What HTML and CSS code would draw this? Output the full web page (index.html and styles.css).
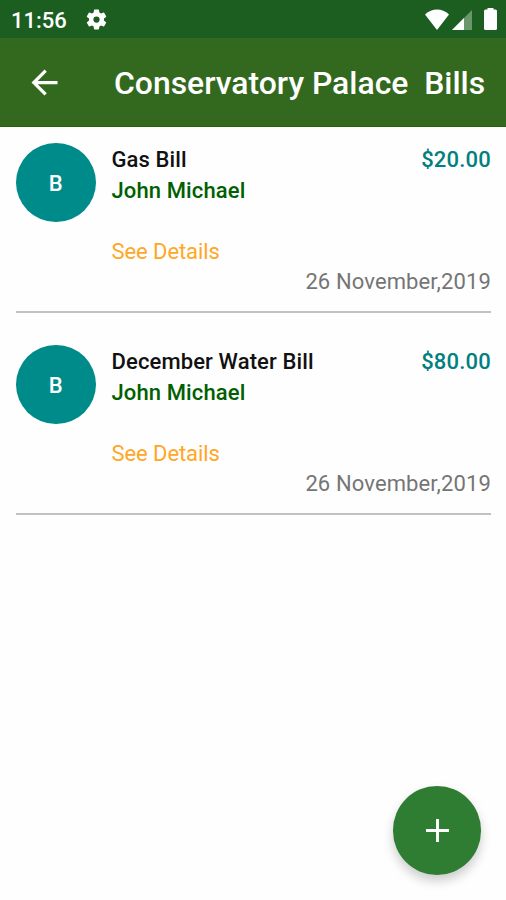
FILE: index.html
```
<!DOCTYPE html>
<html lang="en">
<head>
<meta charset="utf-8">
<title>Bills</title>
<link rel="stylesheet" href="styles.css">
</head>
<body>
<header>
  <div class="status">
    <span class="clock">11:56</span>
    <svg class="gear" viewBox="0 0 24 24"><path d="M19.14 12.94c.04-.3.06-.61.06-.94 0-.32-.02-.64-.07-.94l2.03-1.58a.49.49 0 0 0 .12-.61l-1.92-3.32a.49.49 0 0 0-.59-.22l-2.39.96c-.5-.38-1.03-.7-1.62-.94l-.36-2.54a.48.48 0 0 0-.48-.41h-3.84c-.24 0-.43.17-.47.41l-.36 2.54c-.59.24-1.13.57-1.62.94l-2.39-.96a.48.48 0 0 0-.59.22L2.74 8.87c-.12.21-.08.47.12.61l2.03 1.58c-.05.3-.09.63-.09.94s.02.64.07.94l-2.03 1.58a.49.49 0 0 0-.12.61l1.92 3.32c.12.22.37.29.59.22l2.39-.96c.5.38 1.03.7 1.62.94l.36 2.54c.05.24.24.41.48.41h3.84c.24 0 .44-.17.47-.41l.36-2.54c.59-.24 1.13-.56 1.62-.94l2.39.96c.22.08.47 0 .59-.22l1.92-3.32a.49.49 0 0 0-.12-.61zM12 15a3 3 0 1 1 0-6 3 3 0 0 1 0 6z"/></svg>
    <div class="indicators">
      <svg class="wifi" viewBox="0 0 24 21"><path d="M12 21 0 5.5Q5.500 .5 12 .5T24 5.500z"/></svg>
      <svg class="signal" viewBox="0 0 20 20"><path opacity=".35" d="M0 20 20 0v20z"/><path d="M0 20 12 8v12z"/></svg>
      <svg class="battery" viewBox="0 0 13 22"><path d="M3.500 0h6v1.500h2Q13 1.500 13 3v17.500Q13 22 11.500 22h-10Q0 22 0 20.500V3Q0 1.500 1.500 1.500h2z"/></svg>
    </div>
  </div>
  <div class="appbar">
    <svg class="back" viewBox="0 0 24 24"><path d="M20 11H7.830l5.590-5.590L12 4l-8 8 8 8 1.410-1.410L7.830 13H20z"/></svg>
    <h1>Conservatory Palace&nbsp; Bills</h1>
  </div>
</header>
<main>
  <article class="bill">
    <div class="avatar">B</div>
    <div class="info">
      <div class="row"><span class="name">Gas Bill</span><span class="amount">$20.00</span></div>
      <div class="person">John Michael</div>
      <div class="details">See Details</div>
      <div class="date">26 November,2019</div>
    </div>
  </article>
  <article class="bill">
    <div class="avatar">B</div>
    <div class="info">
      <div class="row"><span class="name">December Water Bill</span><span class="amount">$80.00</span></div>
      <div class="person">John Michael</div>
      <div class="details">See Details</div>
      <div class="date">26 November,2019</div>
    </div>
  </article>
</main>
<div class="fab"><svg viewBox="0 0 24 24"><path d="M10.600 1h2.800v9.600h9.600v2.800h-9.600V23h-2.800v-9.600H1v-2.800h9.600z"/></svg></div>
</body>
</html>
```
FILE: styles.css
```
* { box-sizing: border-box; }
body {
  margin: 0;
  height: 900px;
  overflow: hidden;
  background: #fefefe;
  font: 22px/30.5px Roboto, sans-serif;
}
svg { display: block; fill: #fff; }
.status {
  display: flex;
  align-items: center;
  height: 38px;
  padding: 0 9px 0 11px;
  background: #1b5e20;
  color: #fff;
}
.clock { width: 72.500px; font-weight: 500; font-size: 22px; padding-top: 4px; }
.gear { width: 25px; height: 25px; margin-top: 1px; }
.indicators { display: flex; align-items: flex-end; margin: 0 0 1px auto; }
.wifi { width: 24px; height: 21px; }
.signal { width: 20px; height: 20px; margin-left: 3px; }
.battery { width: 13px; height: 22px; margin-left: 12px; }
.appbar {
  display: flex;
  align-items: center;
  height: 89px;
  padding-left: 25px;
  background: #33691e;
  border-bottom: 1px solid #26600e;
  color: #fff;
}
.back { width: 39px; height: 39px; margin-top: 1px; }
h1 {
  margin: 1px 0 0 50px;
  font-size: 31.900px;
  line-height: 38px;
  font-weight: 500;
  white-space: nowrap;
}
main { padding: 0 15px 0 16px; }
.bill {
  display: flex;
  height: 186px;
  padding-top: 16px;
  border-bottom: 2px solid #c1c1c1;
}
.bill + .bill { margin-top: 16px; }
.avatar {
  display: flex;
  align-items: center;
  justify-content: center;
  width: 79.500px;
  height: 79px;
  margin-right: 16px;
  padding-top: 3px;
  border-radius: 50%;
  background: #008b8b;
  color: #fff;
  font-weight: 500;
}
.info { flex: 1; padding-top: 2px; }
.row { display: flex; justify-content: space-between; }
.name, .person { font-weight: 500; letter-spacing: .12px; }
.name { color: #111; }
.person { color: #005f00; }
.amount { font-weight: 500; letter-spacing: .2px; color: #008080; }
.details { margin-top: 30.500px; color: #ffa726; letter-spacing: -.08px; }
.date { color: #757575; text-align: right; letter-spacing: .12px; }
.fab {
  position: fixed;
  right: 24.600px;
  bottom: 24.800px;
  display: flex;
  align-items: center;
  justify-content: center;
  width: 88.800px;
  height: 88.800px;
  border-radius: 50%;
  background: #2e7d32;
  box-shadow: 0 6px 11px rgba(0, 0, 0, .2);
}
.fab svg { width: 25px; height: 25px; }
```
